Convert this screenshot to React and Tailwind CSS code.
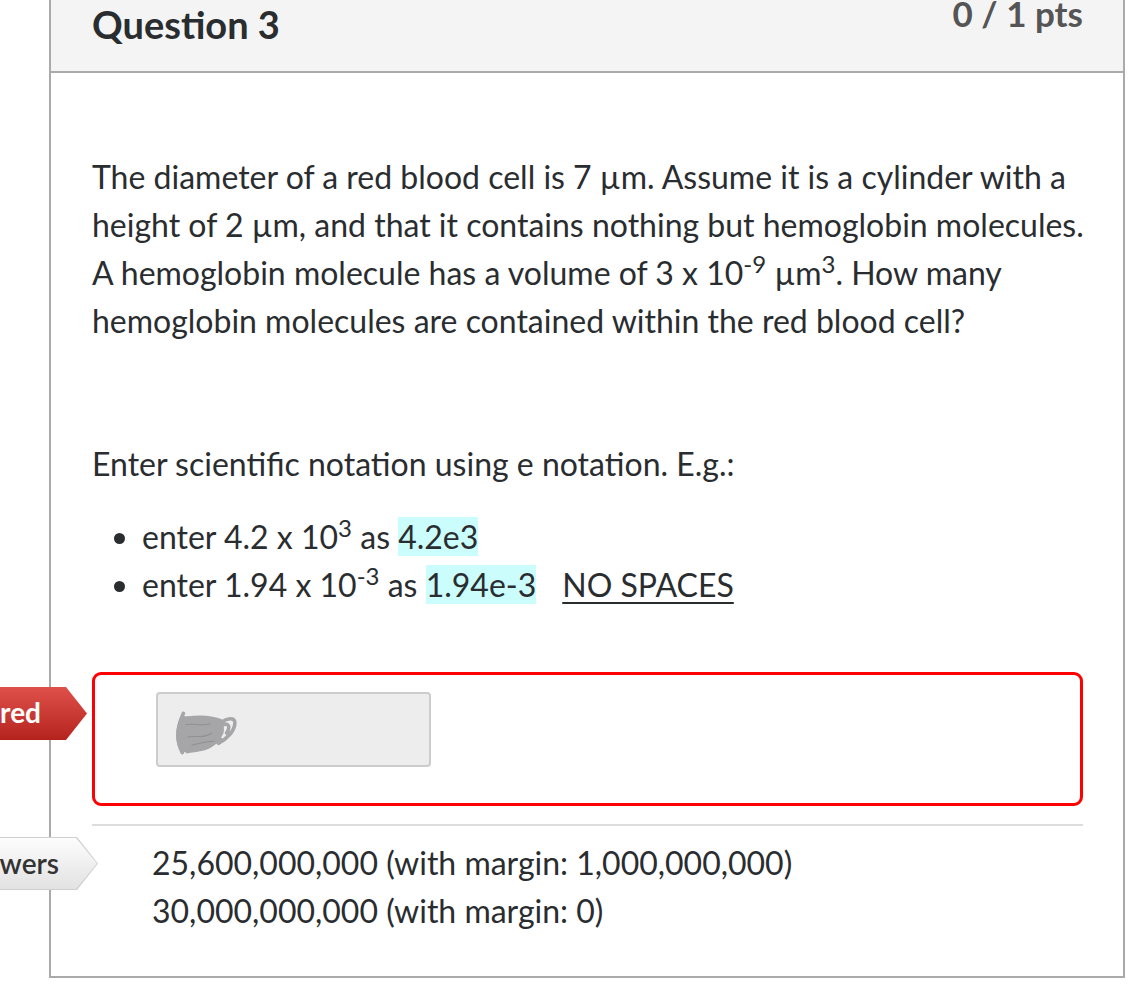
import React from 'react';

const Scribble = () => (
  <svg width="66" height="46" viewBox="0 0 64 44" className="absolute left-[15px] top-[16px]">
    <path d="M8 5 C3 14 1 27 6 37 C10 43 20 41 30 39 C38 37 45 31 49 22 C51 14 47 8 38 7 C28 6 16 7 8 5 Z" fill="#a6a6a9" />
    <path d="M10 3 C4 16 3 30 9 41 M12 8 C24 6 36 6 46 10 M8 20 C22 16 34 18 46 16 M6 30 C20 28 34 26 44 24 M14 40 C26 36 38 34 46 28 M46 12 C52 8 60 6 60 12 C60 20 52 28 44 32 M48 14 C54 12 56 16 52 22" fill="none" stroke="#a6a6a9" strokeWidth="3.5" strokeLinecap="round" />
    <path d="M12 14 C20 12 28 16 36 13 M14 26 C22 24 30 28 38 22 M18 34 C26 32 32 30 40 30" fill="none" stroke="#909093" strokeWidth="1" />
  </svg>
);

const Hl = ({ children }) => <span className="bg-[#ccfdfd]">{children}</span>;

const tagShape = '[clip-path:polygon(0_0,calc(100%-21px)_0,100%_50%,calc(100%-21px)_100%,0_100%)]';

export default function App() {
  return (
    <div className="min-h-screen bg-white font-['Lato','Liberation_Sans',sans-serif] text-[#2a2d30]">
      <div className="relative ml-[49px] w-[1076px] border-x-2 border-b-2 border-[#aaaaaa]">
        {/* Header */}
        <div className="flex h-[73px] items-start justify-between border-b-2 border-[#aaaaaa] bg-[#f4f4f4] pl-[41px] pr-[40px]">
          <h2 className="text-[38px] font-bold leading-[48px]">Question 3</h2>
          <div className="text-[35px] font-bold leading-[27px] text-[#555555]">0 / 1 pts</div>
        </div>

        {/* Body */}
        <div className="pl-[41px] pr-[40px] pt-[80px] pb-[41px] text-[32px] leading-[48px]">
          <p className="whitespace-nowrap">
            The diameter of a red blood cell is 7 µm. Assume it is a cylinder with a<br />
            height of 2 µm, and that it contains nothing but hemoglobin molecules.<br />
            A hemoglobin molecule has a volume of 3 x 10<sup>-9</sup> µm<sup>3</sup>. How many<br />
            hemoglobin molecules are contained within the red blood cell?
          </p>
          <p className="mt-[95px]">Enter scientific notation using e notation. E.g.:</p>
          <ul className="mt-[25px] list-disc pl-[50px]">
            <li>
              enter 4.2 x 10<sup>3</sup> as <Hl>4.2e3</Hl>
            </li>
            <li>
              enter 1.94 x 10<sup>-3</sup> as <Hl>1.94e-3</Hl>
              <span className="ml-[26px] underline decoration-2 underline-offset-[5px]">NO SPACES</span>
            </li>
          </ul>

          {/* Answer box */}
          <div className="mt-[63px] h-[134px] rounded-[9px] border-[3px] border-[#ff0000] pl-[61px] pt-[17px]">
            <div className="relative h-[75px] w-[275px] rounded-[4px] border-2 border-[#cccccc] bg-[#ededed]">
              <Scribble />
            </div>
          </div>

          <div className="mt-[18px] h-[2px] bg-[#dddddd]" />

          <div className="mt-[13px] pl-[60px]">
            <div>25,600,000,000 (with margin: 1,000,000,000)</div>
            <div>30,000,000,000 (with margin: 0)</div>
          </div>
        </div>

        {/* Side tags */}
        <div className={`absolute left-[-235px] top-[687px] h-[53px] w-[271px] bg-linear-to-b from-[#e0504a] to-[#b5221e] ${tagShape}`}>
          <div className="whitespace-nowrap pr-[46px] text-right text-[28px] font-bold leading-[51px] text-white">You Answered</div>
        </div>
        <div className={`absolute left-[-245px] top-[837px] h-[53px] w-[292px] bg-[#cfcfcf] ${tagShape}`}>
          <div className={`absolute inset-[1px] bg-linear-to-b from-[#fdfdfd] to-[#e2e2e2] ${tagShape}`}>
            <div className="whitespace-nowrap pr-[38px] text-right text-[28px] font-semibold leading-[50px] text-[#333333]">Correct Answers</div>
          </div>
        </div>
      </div>
    </div>
  );
}
